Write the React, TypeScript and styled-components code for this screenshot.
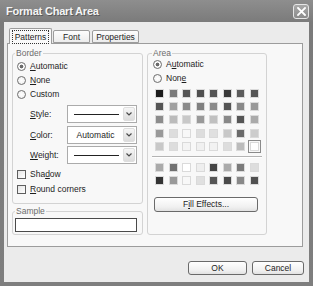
import React from 'react';
import styled, { createGlobalStyle } from 'styled-components';

const Global = createGlobalStyle`
  html, body { margin: 0; padding: 0; background: #ebebeb; }
  body {
    font-family: "Liberation Sans", Arial, sans-serif;
    font-size: 8.5px;
    color: #1e1e1e;
  }
`;

const Window = styled.div`
  width: 313px;
  height: 286px;
  box-sizing: border-box;
  display: flex;
  flex-direction: column;
  background: linear-gradient(#8e8e8e, #7a7a7a 8%, #7e7e7e);
  padding: 0 4px 4px 4px;
`;

const TitleBar = styled.div`
  height: 22px;
  display: flex;
  align-items: center;
  justify-content: space-between;
  padding-left: 2px;
`;

const Title = styled.div`
  font-size: 11px;
  font-weight: bold;
  color: #f4f4f4;
  letter-spacing: -0.2px;
  text-shadow: 1px 1px 0 #5a5a5a;
`;

const CloseButton = styled.div`
  width: 16px;
  height: 15px;
  box-sizing: border-box;
  border: 1px solid #e6e6e6;
  border-radius: 3px;
  background: linear-gradient(#a8a8a8, #8c8c8c);
  display: flex;
  align-items: center;
  justify-content: center;
`;

const Body = styled.div`
  flex: 1;
  background: #ebebeb;
  padding: 6px 5px 0 3px;
  display: flex;
  flex-direction: column;
`;

const TabRow = styled.div`
  display: flex;
  align-items: flex-end;
  height: 15px;
  padding-left: 2px;
  gap: 1px;
  position: relative;
  z-index: 1;
`;

const Tab = styled.div<{ $active?: boolean; $w: number }>`
  width: ${(p) => p.$w}px;
  height: ${(p) => (p.$active ? 16 : 13)}px;
  margin-bottom: ${(p) => (p.$active ? -1 : 0)}px;
  margin-right: ${(p) => (p.$active ? 0 : 1)}px;
  box-sizing: border-box;
  border: 1px solid #9c9c9c;
  border-bottom: ${(p) => (p.$active ? 'none' : '1px solid #9c9c9c')};
  border-radius: 2px 2px 0 0;
  background: ${(p) => (p.$active ? '#f9f9f9' : 'linear-gradient(#fdfdfd, #ececec)')};
  display: flex;
  align-items: center;
  justify-content: center;
`;

const FocusLabel = styled.span`
  outline: 1px dotted #333;
  padding: 1px 2px;
`;

const Panel = styled.div`
  height: 204px;
  width: 296px;
  box-sizing: border-box;
  border: 1px solid #9c9c9c;
  background: #f8f8f8;
  display: flex;
  gap: 4px;
  align-items: flex-start;
  padding: 4px 0 0 4px;
`;

const Column = styled.div`
  display: flex;
  flex-direction: column;
  gap: 2px;
`;

const Group = styled.fieldset<{ $w: number; $h: number }>`
  margin: 0;
  padding: 0;
  width: ${(p) => p.$w}px;
  height: ${(p) => p.$h}px;
  box-sizing: border-box;
  border: 1px solid #d3d3d3;
  border-radius: 3px;
  min-width: 0;
`;

const Legend = styled.legend<{ $ml: number }>`
  padding: 0 1px;
  margin-left: ${(p) => p.$ml}px;
  line-height: 10px;
  color: #6c6c6c;
`;

const GroupBody = styled.div<{ $pl: number; $pt: number }>`
  display: flex;
  flex-direction: column;
  padding-left: ${(p) => p.$pl}px;
  padding-top: ${(p) => p.$pt}px;
`;

const OptionRow = styled.div<{ $h?: number; $mt?: number }>`
  height: ${(p) => p.$h ?? 14}px;
  margin-top: ${(p) => p.$mt ?? 0}px;
  display: flex;
  align-items: center;
  gap: 4px;
`;

const Radio = styled.span<{ $on?: boolean }>`
  width: 9px;
  height: 9px;
  box-sizing: border-box;
  border-radius: 50%;
  border: 1px solid #6e6e6e;
  background: radial-gradient(circle, ${(p) => (p.$on ? '#6a6a6a 0 1.6px, #fff 2.2px' : '#fff 0')}, #ececec 100%);
  flex: none;
`;

const Check = styled.span`
  width: 9px;
  height: 9px;
  box-sizing: border-box;
  border: 1px solid #5e5e5e;
  background: linear-gradient(135deg, #e4e4e4, #fff);
  flex: none;
`;

const FieldRow = styled.div`
  height: 18px;
  display: flex;
  align-items: center;
  padding-left: 13px;
`;

const FieldLabel = styled.span`
  width: 37px;
`;

const Select = styled.div`
  width: 70px;
  height: 18px;
  box-sizing: border-box;
  border: 1px solid #ababab;
  background: #fff;
  display: flex;
  align-items: center;
  padding-right: 1px;
`;

const SelectValue = styled.div`
  flex: 1;
  display: flex;
  align-items: center;
  justify-content: center;
`;

const SelectLine = styled.div`
  width: 45px;
  height: 1px;
  background: #222;
  margin-left: 2px;
`;

const SelectArrow = styled.div`
  width: 12px;
  height: 14px;
  box-sizing: border-box;
  border: 1px solid #dedede;
  border-radius: 2px;
  background: linear-gradient(#f6f6f6, #dcdcdc);
  display: flex;
  align-items: center;
  justify-content: center;
`;

const FieldStack = styled.div`
  display: flex;
  flex-direction: column;
  gap: 2.5px;
  margin: 4px 0 2.5px;
`;

const SampleBox = styled.div`
  width: 122px;
  height: 14px;
  box-sizing: border-box;
  margin: 2px 0 0 2px;
  border: 1px solid #4a4a4a;
  background: #fff;
`;

const SwatchGrid = styled.div<{ $mt: number }>`
  display: grid;
  grid-template-columns: repeat(8, 9px);
  grid-auto-rows: 9px;
  column-gap: 4.5px;
  row-gap: 4.4px;
  margin: ${(p) => p.$mt}px 0 0 2px;
`;

const Swatch = styled.span<{ $c: string; $sel?: boolean }>`
  box-sizing: border-box;
  background: ${(p) => p.$c};
  border: 1px solid #dadada;
  outline: ${(p) => (p.$sel ? '1px solid #8a8a8a' : 'none')};
  outline-offset: 1px;
`;

const Separator = styled.div`
  height: 0;
  margin: 5px 4px 0 -1px;
  border-top: 1px solid #b4b4b4;
  border-bottom: 1px solid #fff;
`;

const PushButton = styled.div<{ $w: number; $h: number }>`
  width: ${(p) => p.$w}px;
  height: ${(p) => p.$h}px;
  box-sizing: border-box;
  border: 1px solid #6a6a6a;
  border-radius: 3px;
  background: linear-gradient(#ffffff, #f0f0f0 70%, #e2e2e2);
  display: flex;
  align-items: center;
  justify-content: center;
  flex: none;
`;

const FillButton = styled(PushButton)`
  margin: 12px 0 0 1px;
`;

const ButtonRow = styled.div`
  margin-top: 14px;
  display: flex;
  justify-content: flex-end;
  gap: 5px;
`;

const U = styled.span`
  text-decoration: underline;
`;

const mainSwatches = [
  ['#1c1c1c', '#7a7a7a', '#565656', '#505050', '#555555', '#3a3a3a', '#5c5c5c', '#555555'],
  ['#555555', '#a0a0a0', '#8a8a8a', '#808080', '#8a8a8a', '#555555', '#888888', '#999999'],
  ['#8c8c8c', '#bbbbbb', '#c8c8c8', '#999999', '#c0c0c0', '#888888', '#555555', '#aaaaaa'],
  ['#999999', '#dddddd', '#f8f8f8', '#dddddd', '#e0e0e0', '#c8c8c8', '#6a6a6a', '#cccccc'],
  ['#c8c8c8', '#dddddd', '#f4f4f4', '#f0f0f0', '#f2f2f2', '#dddddd', '#bbbbbb', '#ffffff'],
];

const extraSwatches = [
  ['#aaaaaa', '#707070', '#ffffff', '#eeeeee', '#444444', '#aaaaaa', '#7a7a7a', '#dddddd'],
  ['#333333', '#999999', '#f8f8f8', '#e0e0e0', '#555555', '#4a4a4a', '#888888', '#505050'],
];

function Chevron() {
  return (
    <svg width="6" height="4" viewBox="0 0 6 4">
      <polyline points="0.5,0.5 3,3 5.5,0.5" fill="none" stroke="#4a4a4a" strokeWidth="1.2" />
    </svg>
  );
}

export default function App() {
  return (
    <>
      <Global />
      <Window>
        <TitleBar>
          <Title>Format Chart Area</Title>
          <CloseButton>
            <svg width="9" height="9" viewBox="0 0 9 9">
              <path d="M1 1 L8 8 M8 1 L1 8" stroke="#fff" strokeWidth="1.8" strokeLinecap="square" />
            </svg>
          </CloseButton>
        </TitleBar>
        <Body>
          <TabRow>
            <Tab $active $w={43}>
              <FocusLabel>Patterns</FocusLabel>
            </Tab>
            <Tab $w={37}>Font</Tab>
            <Tab $w={47}>Properties</Tab>
          </TabRow>
          <Panel>
            <Column>
              <Group $w={131} $h={156}>
                <Legend $ml={2}>Border</Legend>
                <GroupBody $pl={4} $pt={1}>
                  <OptionRow>
                    <Radio $on />
                    <span><U>A</U>utomatic</span>
                  </OptionRow>
                  <OptionRow>
                    <Radio />
                    <span><U>N</U>one</span>
                  </OptionRow>
                  <OptionRow>
                    <Radio />
                    <span>Custom</span>
                  </OptionRow>
                  <FieldStack>
                    <FieldRow>
                      <FieldLabel><U>S</U>tyle:</FieldLabel>
                      <Select>
                        <SelectValue><SelectLine /></SelectValue>
                        <SelectArrow><Chevron /></SelectArrow>
                      </Select>
                    </FieldRow>
                    <FieldRow>
                      <FieldLabel><U>C</U>olor:</FieldLabel>
                      <Select>
                        <SelectValue>Automatic</SelectValue>
                        <SelectArrow><Chevron /></SelectArrow>
                      </Select>
                    </FieldRow>
                    <FieldRow>
                      <FieldLabel><U>W</U>eight:</FieldLabel>
                      <Select>
                        <SelectValue><SelectLine /></SelectValue>
                        <SelectArrow><Chevron /></SelectArrow>
                      </Select>
                    </FieldRow>
                  </FieldStack>
                  <OptionRow $h={15}>
                    <Check />
                    <span>Sha<U>d</U>ow</span>
                  </OptionRow>
                  <OptionRow $h={15}>
                    <Check />
                    <span><U>R</U>ound corners</span>
                  </OptionRow>
                </GroupBody>
              </Group>
              <Group $w={131} $h={29}>
                <Legend $ml={2}>Sample</Legend>
                <SampleBox />
              </Group>
            </Column>
            <Group $w={120} $h={187}>
              <Legend $ml={4}>Area</Legend>
              <GroupBody $pl={5} $pt={0}>
                <OptionRow $mt={-1}>
                  <Radio $on />
                  <span>A<U>u</U>tomatic</span>
                </OptionRow>
                <OptionRow>
                  <Radio />
                  <span>Non<U>e</U></span>
                </OptionRow>
                <SwatchGrid $mt={3.5}>
                  {mainSwatches.flatMap((row, r) =>
                    row.map((c, i) => <Swatch key={`m${r}-${i}`} $c={c} $sel={r === 4 && i === 7} />)
                  )}
                </SwatchGrid>
                <Separator />
                <SwatchGrid $mt={4.5}>
                  {extraSwatches.flatMap((row, r) =>
                    row.map((c, i) => <Swatch key={`e${r}-${i}`} $c={c} />)
                  )}
                </SwatchGrid>
                <FillButton $w={104} $h={15}>
                  F<U>i</U>ll Effects...
                </FillButton>
              </GroupBody>
            </Group>
          </Panel>
          <ButtonRow>
            <PushButton $w={59} $h={14}>OK</PushButton>
            <PushButton $w={52} $h={14}>Cancel</PushButton>
          </ButtonRow>
        </Body>
      </Window>
    </>
  );
}
